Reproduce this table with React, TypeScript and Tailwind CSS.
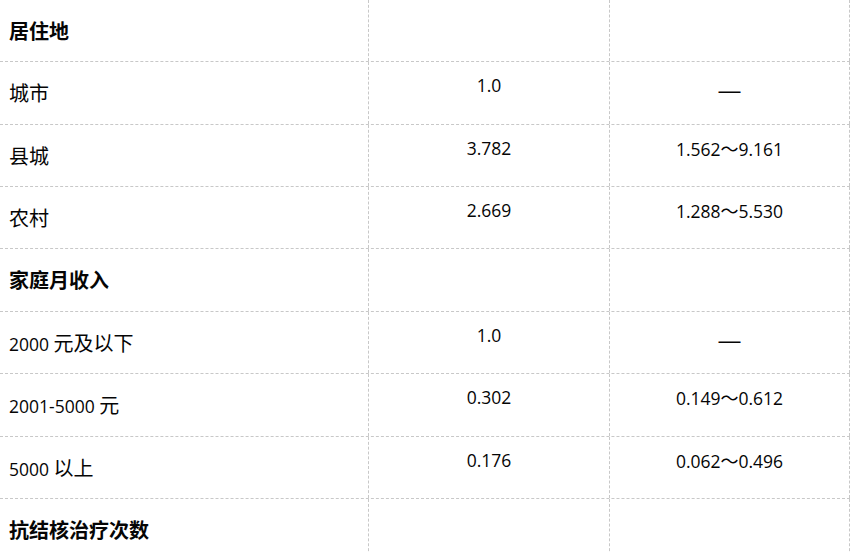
const latin = "font-['Open_Sans','Noto_Sans_CJK_SC',sans-serif] text-[17.5px]";

type Row = {
  label: string;
  num?: string;
  bold?: boolean;
  or?: string;
  ci?: string;
  h: string;
};

const rows: Row[] = [
  { label: "居住地", bold: true, h: "h-[62px]" },
  { label: "城市", or: "1.0", ci: "—", h: "h-[63px]" },
  { label: "县城", or: "3.782", ci: "1.562～9.161", h: "h-[62px]" },
  { label: "农村", or: "2.669", ci: "1.288～5.530", h: "h-[62px]" },
  { label: "家庭月收入", bold: true, h: "h-[63px]" },
  { label: "元及以下", num: "2000 ", or: "1.0", ci: "—", h: "h-[62px]" },
  { label: "元", num: "2001-5000 ", or: "0.302", ci: "0.149～0.612", h: "h-[63px]" },
  { label: "以上", num: "5000 ", or: "0.176", ci: "0.062～0.496", h: "h-[62px]" },
  { label: "抗结核治疗次数", bold: true, h: "h-[63px]" },
];

const Range = ({ text }: { text: string }) => {
  if (text === "—") {
    return (
      <span className="inline-block pt-[6px] font-['Liberation_Sans',sans-serif] text-[22px] leading-[24px]">
        —
      </span>
    );
  }
  const [a, b] = text.split("～");
  return (
    <span className="leading-[24px]">
      <span className={latin}>{a}</span>
      <span className="font-['Noto_Sans_CJK_SC',sans-serif] text-[18px]">～</span>
      <span className={latin}>{b}</span>
    </span>
  );
};

const App = () => {
  return (
    <div className="h-[552px] w-[850px] overflow-hidden bg-white text-[#050505]">
      <div className="flex w-[850px] flex-col">
        {rows.map((r, i) => (
          <div key={i} className={`flex ${r.h} border-b border-dashed border-[#c8c8c8]`}>
            <div className="flex w-[369px] items-center border-r border-dashed border-[#c8c8c8] pl-[9px]">
              <span
                className={`font-['Noto_Sans_CJK_SC',sans-serif] text-[20px] ${r.bold ? "font-bold" : ""}`}
              >
                {r.num && <span className={latin}>{r.num}</span>}
                {r.label}
              </span>
            </div>
            <div className="flex w-[241px] justify-center border-r border-dashed border-[#c8c8c8] pt-[11px]">
              {r.or && <span className={`${latin} leading-[24px]`}>{r.or}</span>}
            </div>
            <div className="flex w-[240px] justify-center border-r border-dashed border-[#c8c8c8] pt-[11px]">
              {r.ci && <Range text={r.ci} />}
            </div>
          </div>
        ))}
      </div>
    </div>
  );
};

export default App;
